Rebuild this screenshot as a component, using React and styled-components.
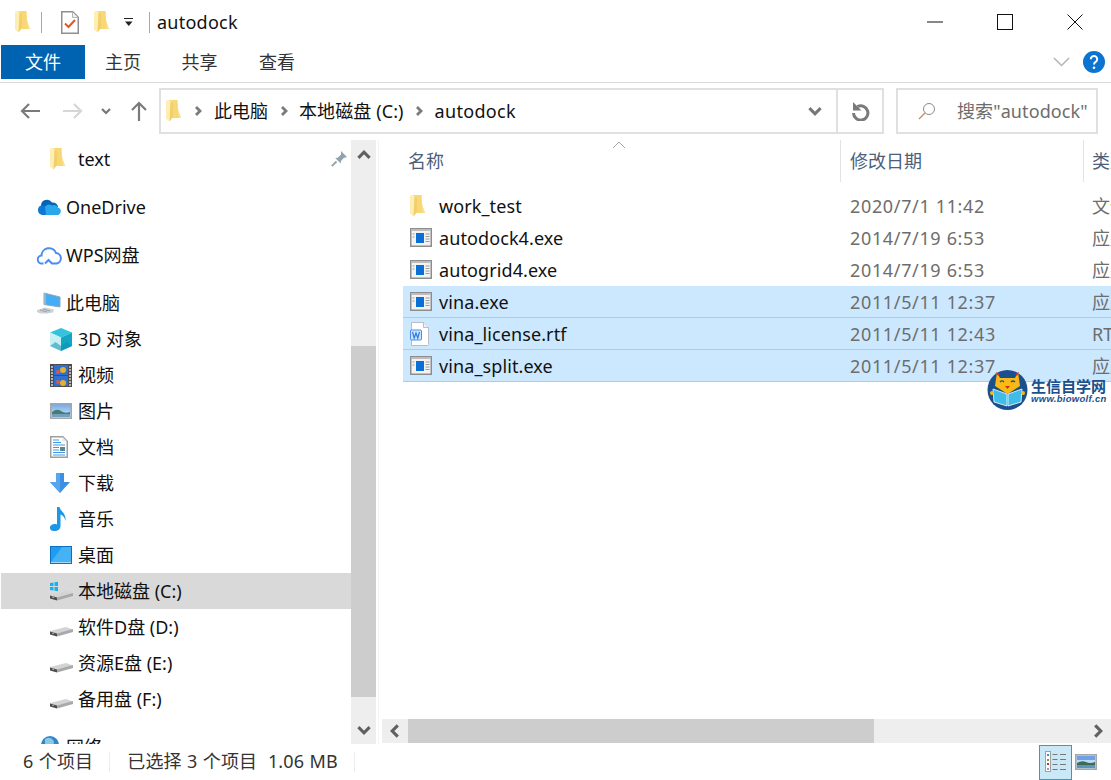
import React from 'react';
import styled, { createGlobalStyle } from 'styled-components';

const Global = createGlobalStyle`
  html, body { margin: 0; padding: 0; background: #fff; overflow: hidden; }
  body { font-family: "Noto Sans", "Noto Sans CJK SC", sans-serif; font-size: 18px; line-height: 24px; color: #000; }
`;

const Window = styled.div`
  position: relative; width: 1111px; height: 780px; display: flex; flex-direction: column; overflow: hidden; background: #fff;
`;
const TitleBar = styled.div`
  height: 45px; box-sizing: border-box; padding-bottom: 1px; display: flex; align-items: center; flex: none; position: relative;
`;
const QuickSlot = styled.div`
  width: ${p => p.$w}px; margin-left: ${p => p.$ml || 0}px; display: flex; flex: none; align-items: center;
`;
const VRule = styled.div`
  width: 1px; height: 21px; background: #a8a8a8; flex: none; margin-left: ${p => p.$ml}px; margin-right: ${p => p.$mr}px;
`;
const TitleText = styled.span`
  font-size: 18px; color: #111; letter-spacing: .25px;
`;
const WinControls = styled.div`
  margin-left: auto; display: flex; align-items: center; padding-right: 28px; gap: 54px;
`;
const Tabs = styled.div`
  height: 37px; display: flex; flex: none; padding-left: 1px; border-bottom: 1px solid #dadada; align-items: flex-start; position: relative;
`;
const Tab = styled.div`
  width: ${p => p.$w}px; height: 34px; box-sizing: border-box; padding-bottom: 1px; display: flex; align-items: center; justify-content: center; flex: none;
  font-size: 18px; background: ${p => p.$active ? '#0063b1' : 'transparent'}; color: ${p => p.$active ? '#fff' : '#333'};
`;
const RibbonRight = styled.div`
  margin-left: auto; display: flex; align-items: center; height: 34px; padding-right: 6px; gap: 13px;
`;
const AddressRow = styled.div`
  height: 57px; flex: none; display: flex; align-items: center; padding-bottom: 1px; box-sizing: border-box;
`;
const NavButton = styled.div`
  width: ${p => p.$w}px; height: 46px; flex: none; display: flex; align-items: center; justify-content: center;
`;
const AddressBox = styled.div`
  width: 725px; height: 46px; margin-left: 7px; flex: none; box-sizing: border-box; border: 2px solid #e0e0e0;
  display: flex; align-items: center;
`;
const Crumbs = styled.div`
  flex: 1; display: flex; align-items: center; padding-left: 5px; min-width: 0;
`;
const Crumb = styled.span`
  font-size: 18px; color: #111; white-space: nowrap; letter-spacing: ${p => p.$track || 0}px;
`;
const CrumbSep = styled.span`
  width: ${p => p.$w}px; flex: none; display: flex; justify-content: center;
`;
const AddressEnd = styled.div`
  width: ${p => p.$w}px; height: 100%; flex: none; display: flex; align-items: center; justify-content: center;
  border-left: ${p => p.$rule ? '2px solid #e0e0e0' : 'none'}; box-sizing: border-box;
`;
const SearchBox = styled.div`
  width: 202px; height: 46px; margin-left: 12px; box-sizing: border-box; border: 2px solid #e0e0e0; flex: none;
  display: flex; align-items: center; padding-left: 20px; gap: 21px; overflow: hidden;
`;
const SearchText = styled.span`
  font-size: 18px; color: #6d6d6d; white-space: nowrap; letter-spacing: .1px;
`;
const Main = styled.div`
  flex: 1; min-height: 0; display: flex;
`;
const NavPane = styled.div`
  width: 350px; flex: none; margin-left: 1px; padding-top: 1px; box-sizing: border-box; overflow: hidden;
`;
const NavRow = styled.div`
  height: 36px; display: flex; align-items: center; box-sizing: border-box; position: relative;
  padding-left: ${p => p.$deep ? 49 : 36}px; margin-top: ${p => p.$gap ? 12 : 0}px;
  background: ${p => p.$selected ? '#d9d9d9' : 'transparent'}; color: #111; font-size: 18px; white-space: nowrap;
`;
const NavIcon = styled.span`
  width: ${p => p.$deep ? 28 : 29}px; flex: none; display: flex; align-items: center;
`;
const Pin = styled.span`
  position: absolute; right: 4px; top: 10px; display: flex;
`;
const VScroll = styled.div`
  width: 25px; flex: none; background: #eeeeee; display: flex; flex-direction: column; align-items: center;
`;
const VButton = styled.div`
  height: ${p => p.$h}px; flex: none; width: 100%; display: flex; justify-content: center; align-items: ${p => p.$end ? 'flex-end' : 'center'};
  padding-bottom: ${p => p.$end ? 7 : 0}px; box-sizing: border-box;
`;
const VThumb = styled.div`
  width: 100%; height: 351px; margin-top: 176px; flex: none; background: #cdcdcd;
`;
const PaneRule = styled.div`
  width: 1px; flex: none; margin-left: 2px; margin-right: 3px; background: #f4f4f4;
`;
const FilePane = styled.div`
  flex: 1; min-width: 0; display: flex; flex-direction: column; overflow: hidden;
`;
const HeaderRow = styled.div`
  height: 42px; flex: none; display: flex; position: relative; align-items: stretch; margin-bottom: 8px;
`;
const HeadCell = styled.div`
  width: ${p => p.$w}px; flex: none; box-sizing: border-box; padding-left: ${p => p.$pl}px;
  border-right: ${p => p.$rule ? '1px solid #e2e2e2' : 'none'}; display: flex; align-items: center;
  font-size: 18px; color: #4c607a; white-space: nowrap;
`;
const SortCaret = styled.span`
  position: absolute; left: 230px; top: 1px; display: flex;
`;
const FileList = styled.div`
  flex: 1; min-height: 0; padding-left: 21px;
`;
const FileRow = styled.div`
  height: 32px; box-sizing: border-box; display: grid; grid-template-columns: 29px 411px 242px 60px; align-items: center;
  padding-left: 7px; white-space: nowrap; overflow: hidden; width: 730px;
  background: ${p => p.$selected ? '#cce8ff' : 'transparent'};
  border-bottom: 1px solid ${p => p.$selected ? '#99d1ff' : 'transparent'};
`;
const FileIcon = styled.span`
  display: flex; align-items: center;
`;
const FileName = styled.span`
  font-size: 18px; color: #111; letter-spacing: .1px;
`;
const FileMeta = styled.span`
  font-size: 18px; color: #6d6d6d; letter-spacing: ${p => p.$track || 0}px;
`;
const HScroll = styled.div`
  height: 24px; flex: none; background: #eeeeee; display: flex; align-items: center; margin-bottom: 1px;
`;
const HThumb = styled.div`
  width: 466px; height: 100%; background: #cdcdcd; flex: none;
`;
const HButton = styled.div`
  width: 26px; flex: none; height: 100%; display: flex; align-items: center; justify-content: center;
  margin-left: ${p => p.$auto ? 'auto' : 0};
`;
const StatusBar = styled.div`
  height: 36px; flex: none; display: flex; align-items: center; font-size: 18px; color: #333; white-space: nowrap;
`;
const StatusText = styled.span`
  margin-left: ${p => p.$ml}px; margin-bottom: 2px; letter-spacing: .15px; word-spacing: .5px;
`;
const StatusRule = styled.span`
  width: 1px; height: 20px; background: #ececec; flex: none; margin-left: ${p => p.$ml}px;
`;
const ViewButtons = styled.div`
  margin-left: auto; display: flex; align-items: center; padding-right: 14px; gap: 3px;
`;
const ViewButton = styled.div`
  width: ${p => p.$w}px; height: 35px; box-sizing: border-box; display: flex; align-items: center; justify-content: center;
  background: ${p => p.$active ? '#cbe8f6' : 'transparent'}; border: ${p => p.$active ? '1px solid #26a0da' : 'none'};
`;
const Watermark = styled.div`
  position: absolute; left: 987px; top: 369px; display: flex; gap: 3px; align-items: center; pointer-events: none;
`;
const WmText = styled.div`
  display: flex; flex-direction: column; color: #1c4f8d; font-family: "Noto Sans CJK SC", sans-serif; margin-top: 2px;
`;
const WmTitle = styled.span`
  font-size: 15px; line-height: 14px; font-weight: 700; letter-spacing: 0;
`;
const WmUrl = styled.span`
  font-family: "Liberation Sans", sans-serif; font-size: 9.5px; line-height: 11px; font-weight: 700; font-style: italic; letter-spacing: .3px;
`;

const Folder = () => (
  <svg width="15" height="22" viewBox="0 0 15 22">
    <path d="M3 0h8.500l.7 10.500L15 18H6z" fill="#f8d775" />
    <path d="M11 0h.5l.7 10.500L15 18h-2.500z" fill="#fbe08e" />
    <path d="M0 .5h3.200L7 2.500V17l-3.500 4.500L0 18.500z" fill="#fdeeb4" />
    <path d="M4.500 1.500L7 2.500V17l-3.500 4.500z" fill="#f3cf6c" />
  </svg>
);
const Chevron = ({ dir = 'right', size = 10, color = '#7a7a7a', w = 2.4 }) => {
  const d = { right: 'M3 1l4 4-4 4', left: 'M7 1L3 5l4 4', down: 'M1 3l4 4 4-4', up: 'M1 7l4-4 4 4' }[dir];
  return <svg width={size} height={size} viewBox="0 0 10 10"><path d={d} fill="none" stroke={color} strokeWidth={w} /></svg>;
};
const ExeIcon = () => (
  <svg width="22" height="19" viewBox="0 0 22 19">
    <rect x=".75" y=".75" width="20.5" height="17.5" fill="#f3f3f3" stroke="#8d8d8d" strokeWidth="1.5" />
    <path d="M1 1h20v2H1z" fill="#bdbdbd" />
    <rect x="6" y="5" width="8" height="10" fill="#0a6fd6" />
    <path d="M15.5 6h4M15.5 8.5h4M15.5 11h4M15.5 13.5h4M2.5 6h2M2.5 9h2" stroke="#9a9a9a" />
  </svg>
);
const RtfIcon = () => (
  <svg width="20" height="24" viewBox="0 0 20 24">
    <path d="M1.5.5h12l5 5v17a1 1 0 0 1-1 1h-16z" fill="#fff" stroke="#b9bcc4" />
    <path d="M13.5.5v5h5" fill="#eef0f4" stroke="#b9bcc4" />
    <rect x=".5" y="8" width="11" height="10" rx="1" fill="#cfe2fb" stroke="#4a8fe6" />
    <path d="M2.500 10l1.700 6 1.800-5 1.800 5 1.700-6" fill="none" stroke="#2b7ae0" strokeWidth="1.2" />
  </svg>
);
const Drive = ({ win }) => (
  <svg width="23" height="20" viewBox="0 0 23 20">
    <path d="M0 14l16-4 7 2.500v2L7 19 0 17z" fill="#d4d4d4" />
    <path d="M0 14.500l7 2V19.500l-7-2z" fill="#4d4d4d" />
    <path d="M7 16.500l16-4.500V15L7 19.500z" fill="#a9a9a9" />
    <path d="M2 16l2 .6" stroke="#7fcf7f" />
    {win && <path d="M0 2l3.500-.5V5H0zM4.500 1.300L8 .8V5H4.500zM0 6h3.500v3.500L0 9zM4.500 6H8v4.300l-3.500-.6z" fill="#10b4f2" />}
  </svg>
);

const navIcons = {
  folder: <Folder />,
  onedrive: (
    <svg width="25" height="17" viewBox="0 0 25 17">
      <path d="M4 7a6 6 0 0 1 11-3.500A5 5 0 0 1 21 8L9 12z" fill="#0364b8" />
      <path d="M9 16H5a5 5 0 0 1-1-9.500 6 6 0 0 1 4 1L21 14l-3 2z" fill="#0f78d4" />
      <path d="M8 7.500a5.500 5.500 0 0 1 7-1 5 5 0 0 1 6 2 4 4 0 0 1 .5 7.500H9z" fill="#28a8ea" />
    </svg>
  ),
  wps: (
    <svg width="25" height="19" viewBox="0 0 25 19">
      <path d="M6.500 17.500H5a4 4 0 0 1-.5-8A7.500 7.500 0 0 1 19 7a5.300 5.300 0 0 1 .5 10.500H15l-3.500-3.500-3.500 3.500" fill="none" stroke="#4a8cf2" strokeWidth="2" />
    </svg>
  ),
  pc: (
    <svg width="24" height="22" viewBox="0 0 24 22">
      <path d="M7 1l16 4v10l-16-2.500z" fill="#43aef5" stroke="#8fa7b8" />
      <path d="M7 1l2 .6v11.200l-2-.3z" fill="#9fb4c2" />
      <path d="M0 18l8-2.500 9 2-1 3-5.500 1H3L0 20z" fill="#cdd2d6" />
      <path d="M3 18l7 2M6 17l7 2" stroke="#9aa2a8" />
    </svg>
  ),
  cube: (
    <svg width="22" height="23" viewBox="0 0 22 23">
      <path d="M11 0l11 4.500-11 5-11-5z" fill="#35c2dc" />
      <path d="M0 4.500l11 5V23L0 18z" fill="#c7f0f4" />
      <path d="M11 9.500l11-5V18l-11 5z" fill="#12a6c4" />
      <path d="M0 18l5.500-4 5.500 4 5.500-4 5.500 4-11 5z" fill="#0e8fb0" opacity=".55" />
    </svg>
  ),
  video: (
    <svg width="22" height="23" viewBox="0 0 22 23">
      <rect width="22" height="23" fill="#4c4c4c" />
      <rect x="4" y="1" width="14" height="10" fill="#2d6fd2" />
      <rect x="4" y="12" width="14" height="10" fill="#2d6fd2" />
      <circle cx="13" cy="6" r="3" fill="#e5b030" /><circle cx="8" cy="8" r="2" fill="#d8584a" />
      <circle cx="13" cy="19" r="3" fill="#e5b030" /><circle cx="8" cy="18" r="2" fill="#d8584a" />
      <path d="M1 3h2M1 6h2M1 9h2M1 12h2M1 15h2M1 18h2M1 21h2M19 3h2M19 6h2M19 9h2M19 12h2M19 15h2M19 18h2M19 21h2" stroke="#d8d8d8" strokeWidth="1.500" />
    </svg>
  ),
  image: (
    <svg width="22" height="16" viewBox="0 0 22 16">
      <defs>
        <linearGradient id="sky" x1="0" y1="0" x2="0" y2="1"><stop offset="0" stopColor="#6ea9e8" /><stop offset="1" stopColor="#d6ebf7" /></linearGradient>
      </defs>
      <rect x=".75" y=".75" width="20.500" height="14.500" fill="url(#sky)" stroke="#a6a6a6" strokeWidth="1.500" />
      <path d="M2 9q5-4 9-1t9 1v2H2z" fill="#4a7a6e" />
      <path d="M2 11h18v3H2z" fill="#6fa0c4" />
    </svg>
  ),
  doc: (
    <svg width="18" height="22" viewBox="0 0 18 22">
      <path d="M.75.750h12l4.500 4.500v16H.75z" fill="#fff" stroke="#9f9f9f" strokeWidth="1.500" />
      <path d="M12.500 1v4.500H17" fill="#e8e8e8" />
      <path d="M3 4h6M3 6.500h8M3 9h12M3 11.500h6M3 14h6M3 16.500h12M3 19h12" stroke="#3b9bea" />
      <rect x="10" y="11" width="5" height="4" fill="#5b8590" />
    </svg>
  ),
  download: (
    <svg width="20" height="20" viewBox="0 0 20 20">
      <path d="M6 0h8v9h6L10 20 0 9h6z" fill="#3c90e2" />
      <path d="M6 0h4v20L0 9h6z" fill="#5aa6ee" />
    </svg>
  ),
  music: (
    <svg width="18" height="24" viewBox="0 0 18 24">
      <path d="M7 0h2.500c.5 4 7 6 6 14-.8-4-3-6-5-6.500V19c0 3-2.500 5-6 5S0 22.500 0 20.500 2.500 17 5 17c.8 0 1.500.1 2 .4z" fill="#1b96e8" />
    </svg>
  ),
  desktop: (
    <svg width="22" height="18" viewBox="0 0 22 18">
      <rect x=".5" y=".5" width="21" height="17" fill="#1f9bf0" stroke="#0a70bf" />
      <path d="M1 16L12 1h9v15z" fill="#45b2f6" />
      <path d="M1 16.500h20" stroke="#fff" strokeOpacity=".6" />
    </svg>
  ),
  cdrive: <Drive win />,
  drive: <Drive />,
  globe: (
    <svg width="24" height="24" viewBox="0 0 24 24">
      <circle cx="13" cy="10" r="9" fill="#2f86c9" />
      <path d="M8 4q5-3 8 1t-3 6-5-7z" fill="#8cc6e8" />
      <path d="M0 16h9v5H0z" fill="#6b8fa8" />
    </svg>
  ),
};

const navItems = [
  { icon: 'folder', label: 'text', deep: true, pin: true },
  { icon: 'onedrive', label: 'OneDrive', gap: true },
  { icon: 'wps', label: 'WPS网盘', gap: true },
  { icon: 'pc', label: '此电脑', gap: true },
  { icon: 'cube', label: '3D 对象', deep: true },
  { icon: 'video', label: '视频', deep: true },
  { icon: 'image', label: '图片', deep: true },
  { icon: 'doc', label: '文档', deep: true },
  { icon: 'download', label: '下载', deep: true },
  { icon: 'music', label: '音乐', deep: true },
  { icon: 'desktop', label: '桌面', deep: true },
  { icon: 'cdrive', label: '本地磁盘 (C:)', deep: true, selected: true },
  { icon: 'drive', label: '软件D盘 (D:)', deep: true },
  { icon: 'drive', label: '资源E盘 (E:)', deep: true },
  { icon: 'drive', label: '备用盘 (F:)', deep: true },
  { icon: 'globe', label: '网络', gap: true },
];

const files = [
  { name: 'work_test', date: '2020/7/1 11:42', type: '文件夹', icon: <Folder /> },
  { name: 'autodock4.exe', date: '2014/7/19 6:53', type: '应用程序', icon: <ExeIcon /> },
  { name: 'autogrid4.exe', date: '2014/7/19 6:53', type: '应用程序', icon: <ExeIcon /> },
  { name: 'vina.exe', date: '2011/5/11 12:37', type: '应用程序', icon: <ExeIcon />, selected: true },
  { name: 'vina_license.rtf', date: '2011/5/11 12:43', type: 'RTF 文件', icon: <RtfIcon />, selected: true },
  { name: 'vina_split.exe', date: '2011/5/11 12:37', type: '应用程序', icon: <ExeIcon />, selected: true },
];

export default function App() {
  return (
    <Window>
      <Global />
      <TitleBar>
        <QuickSlot $w={15} $ml={15}><Folder /></QuickSlot>
        <VRule $ml={11} $mr={19} />
        <QuickSlot $w={18}>
          <svg width="18" height="23" viewBox="0 0 18 23">
            <path d="M.75.750h11l5.500 5.500v16H.75z" fill="#fff" stroke="#8f8f8f" strokeWidth="1.500" />
            <path d="M11.500 1v5.500H17" fill="#eee" stroke="#b5b5b5" />
            <path d="M4 12.500l3.500 3.500L14 9" fill="none" stroke="#e2561f" strokeWidth="2" />
          </svg>
        </QuickSlot>
        <QuickSlot $w={15} $ml={15}><Folder /></QuickSlot>
        <QuickSlot $w={10} $ml={15}>
          <svg width="10" height="10" viewBox="0 0 10 10"><path d="M0 1h9v1H0z" fill="#222" /><path d="M1 4.500h7.500L4.750 9z" fill="#222" /></svg>
        </QuickSlot>
        <VRule $ml={15} $mr={7} />
        <TitleText>autodock</TitleText>
        <WinControls>
          <svg width="16" height="16" viewBox="0 0 16 16"><path d="M0 8h16" stroke="#111" /></svg>
          <svg width="16" height="16" viewBox="0 0 16 16"><rect x=".5" y=".5" width="15" height="15" fill="none" stroke="#111" /></svg>
          <svg width="16" height="16" viewBox="0 0 16 16"><path d="M.5.500l15 15M15.500.500l-15 15" stroke="#111" /></svg>
        </WinControls>
      </TitleBar>
      <Tabs>
        <Tab $w={84} $active>文件</Tab>
        <Tab $w={76}>主页</Tab>
        <Tab $w={77}>共享</Tab>
        <Tab $w={78}>查看</Tab>
        <RibbonRight>
          <svg width="17" height="10" viewBox="0 0 17 10"><path d="M1 1l7.500 7.500L16 1" fill="none" stroke="#b4b4b4" strokeWidth="1.500" /></svg>
          <svg width="22" height="22" viewBox="0 0 22 22">
            <circle cx="11" cy="11" r="11" fill="#0a74d0" />
            <path d="M7.800 8.200a3.200 3.200 0 1 1 4.900 2.700c-1.200.8-1.700 1.300-1.700 2.600" fill="none" stroke="#fff" strokeWidth="2" />
            <circle cx="11" cy="16.800" r="1.300" fill="#fff" />
          </svg>
        </RibbonRight>
      </Tabs>
      <AddressRow>
        <NavButton $w={59}>
          <svg width="20" height="16" viewBox="0 0 20 16"><path d="M20 8H2M9 1L2 8l7 7" fill="none" stroke="#7a7a7a" strokeWidth="2.200" /></svg>
        </NavButton>
        <NavButton $w={27}>
          <svg width="20" height="16" viewBox="0 0 20 16"><path d="M0 8h18M11 1l7 7-7 7" fill="none" stroke="#d6d6d6" strokeWidth="2.200" /></svg>
        </NavButton>
        <NavButton $w={39}><Chevron dir="down" size={10} color="#777" w={2.200} /></NavButton>
        <NavButton $w={27}>
          <svg width="16" height="20" viewBox="0 0 16 20"><path d="M8 20V2M1 9l7-7 7 7" fill="none" stroke="#7a7a7a" strokeWidth="2.200" /></svg>
        </NavButton>
        <AddressBox>
          <Crumbs>
            <Folder />
            <CrumbSep $w={33}><Chevron size={10} w={2.800} /></CrumbSep>
            <Crumb>此电脑</Crumb>
            <CrumbSep $w={31}><Chevron size={10} w={2.800} /></CrumbSep>
            <Crumb $track={.1}>本地磁盘 (C:)</Crumb>
            <CrumbSep $w={31}><Chevron size={10} w={2.800} /></CrumbSep>
            <Crumb $track={.3}>autodock</Crumb>
          </Crumbs>
          <AddressEnd $w={42}><Chevron dir="down" size={14} color="#777" w={2.200} /></AddressEnd>
          <AddressEnd $w={46} $rule>
            <svg width="20" height="20" viewBox="0 0 20 20">
              <path d="M7.500 5.500a7.200 7.200 0 1 1-4 6.500" fill="none" stroke="#7a7a7a" strokeWidth="3" />
              <path d="M3 1v8.500h8.500z" fill="#7a7a7a" />
            </svg>
          </AddressEnd>
        </AddressBox>
        <SearchBox>
          <svg width="18" height="18" viewBox="0 0 18 18">
            <circle cx="11" cy="7" r="5.500" fill="none" stroke="#8a8a8a" />
            <path d="M7 11l-6 6" stroke="#c9875a" strokeWidth="1.200" />
          </svg>
          <SearchText>搜索"autodock"</SearchText>
        </SearchBox>
      </AddressRow>
      <Main>
        <NavPane>
          {navItems.map(it => (
            <NavRow key={it.label} $deep={it.deep} $gap={it.gap} $selected={it.selected}>
              <NavIcon $deep={it.deep}>{navIcons[it.icon]}</NavIcon>
              {it.label}
              {it.pin && (
                <Pin>
                  <svg width="16" height="16" viewBox="0 0 16 16">
                    <path d="M10 0l6 6-2 .8-1 0-3 3.200-.3 2.500-5.500-5.500L6.700 6.800 10 3.500z" fill="#94a3ab" />
                    <path d="M5.500 10.500L.800 15.200" stroke="#94a3ab" strokeWidth="1.800" />
                  </svg>
                </Pin>
              )}
            </NavRow>
          ))}
        </NavPane>
        <VScroll>
          <VButton $h={30}><Chevron dir="up" size={14} color="#606060" w={2.200} /></VButton>
          <VThumb />
          <VButton $h={47} $end><Chevron dir="down" size={14} color="#606060" w={2.200} /></VButton>
        </VScroll>
        <PaneRule />
        <FilePane>
          <HeaderRow>
            <HeadCell $w={459} $pl={26} $rule>名称</HeadCell>
            <HeadCell $w={243} $pl={9} $rule>修改日期</HeadCell>
            <HeadCell $w={28} $pl={8}>类型</HeadCell>
            <SortCaret>
              <svg width="14" height="8" viewBox="0 0 14 8"><path d="M1 7l6-6 6 6" fill="none" stroke="#a8a8a8" /></svg>
            </SortCaret>
          </HeaderRow>
          <FileList>
            {files.map(f => (
              <FileRow key={f.name} $selected={f.selected}>
                <FileIcon>{f.icon}</FileIcon>
                <FileName>{f.name}</FileName>
                <FileMeta $track={.65}>{f.date}</FileMeta>
                <FileMeta>{f.type}</FileMeta>
              </FileRow>
            ))}
          </FileList>
          <HScroll>
            <HButton><Chevron dir="left" size={14} color="#606060" w={2.200} /></HButton>
            <HThumb />
            <HButton $auto><Chevron dir="right" size={14} color="#606060" w={2.200} /></HButton>
          </HScroll>
        </FilePane>
      </Main>
      <StatusBar>
        <StatusText $ml={23}>6 个项目</StatusText>
        <StatusRule $ml={16} />
        <StatusText $ml={17}>已选择 3 个项目&nbsp;&nbsp;1.06 MB</StatusText>
        <StatusRule $ml={16} />
        <ViewButtons>
          <ViewButton $w={33} $active>
            <svg width="22" height="22" viewBox="0 0 22 22">
              <rect x=".5" y=".5" width="5" height="20" fill="#fff" stroke="#a0a0a0" />
              <path d="M2 3h2v2H2z" fill="#3a8fc8" /><path d="M2 8h2v2H2z" fill="#9c8a3a" /><path d="M2 12h2v2H2z" fill="#b03a20" /><path d="M2 17h2v2H2z" fill="#9a9a9a" />
              <path d="M7.500 3.500h5M15 3.500h6M7.500 8.500h5M15 8.500h6M7.500 13.500h5M15 13.500h6M7.500 18.500h5M15 18.500h6" stroke="#777" />
            </svg>
          </ViewButton>
          <ViewButton $w={22}>
            <svg width="22" height="16" viewBox="0 0 22 16">
              <rect x=".75" y=".75" width="20.500" height="14.500" fill="#bcdcf4" stroke="#a6a6a6" strokeWidth="1.500" />
              <path d="M2 2h18v4H2z" fill="#6ea0e8" />
              <path d="M2 9q5-3 9-1t9 0v3H2z" fill="#3d6b58" />
              <path d="M2 11h18v3H2z" fill="#5f93bc" />
            </svg>
          </ViewButton>
        </ViewButtons>
      </StatusBar>
      <Watermark>
        <svg width="41" height="42" viewBox="0 0 41 42">
          <circle cx="20.500" cy="21" r="20" fill="#1c4f8d" />
          <path d="M10 3l3 6h15l3-6 2 14-12.500 8L8 17z" fill="#fbb915" />
          <path d="M9 3l2 4 2-2zM32 3l-2 4-2-2z" fill="#d8281f" />
          <path d="M13 13q2-2 4 0M24 13q2-2 4 0" fill="none" stroke="#1c4f8d" strokeWidth="1.200" />
          <path d="M18 17h5l-2.500 3z" fill="#d8281f" />
          <path d="M6 20l14 5v12L7 33z" fill="#3fbde8" stroke="#fff" strokeWidth=".8" />
          <path d="M35 20l-14 5v12l13-4z" fill="#3fbde8" stroke="#fff" strokeWidth=".8" />
          <circle cx="5" cy="24" r="2" fill="#fbb915" />
          <circle cx="36" cy="24" r="2" fill="#fbb915" />
        </svg>
        <WmText>
          <WmTitle>生信自学网</WmTitle>
          <WmUrl>www.biowolf.cn</WmUrl>
        </WmText>
      </Watermark>
    </Window>
  );
}
